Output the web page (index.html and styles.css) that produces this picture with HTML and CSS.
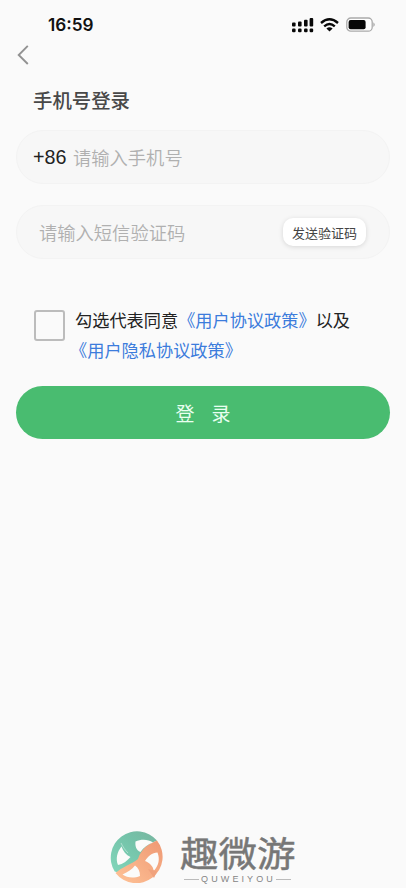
FILE: index.html
```html
<!DOCTYPE html>
<html lang="zh-CN">
<head>
<meta charset="utf-8">
<meta name="viewport" content="width=device-width, initial-scale=1">
<title>手机号登录</title>
<link rel="stylesheet" href="styles.css">
</head>
<body>
<header class="status">
  <span class="time">16:59</span>
  <svg class="signal" width="22" height="16" viewBox="0 0 22 16">
    <g fill="#080808"><rect x="0" y="5.5" width="3.6" height="4" rx="1"/><rect x="6" y="4.5" width="3.6" height="5" rx="1"/><rect x="12" y="2.7" width="3.6" height="6.8" rx="1"/><rect x="17.6" y="1" width="3.6" height="8.5" rx="1"/>
    <rect x="0" y="11.5" width="3.6" height="3.7" rx="1.2"/><rect x="6" y="11.5" width="3.6" height="3.7" rx="1.2"/><rect x="12" y="11.5" width="3.6" height="3.7" rx="1.2"/><rect x="17.6" y="11.5" width="3.6" height="3.7" rx="1.2"/></g>
  </svg>
  <svg class="wifi" width="19" height="14" viewBox="0 0 19 14" fill="none" stroke="#080808" stroke-width="2.4">
    <path d="M1 5Q9.5-2.4 18 5M4.2 8.4Q9.5 3.8 14.8 8.4"/><path d="M9.5 13.5L6.4 10.5Q9.5 8 12.6 10.5Z" fill="#080808" stroke="none"/>
  </svg>
  <svg class="battery" width="31" height="16" viewBox="0 0 31 16">
    <rect x=".8" y="1" width="25.4" height="13.2" rx="4" fill="#fff" stroke="#aaa" stroke-width="1.3"/><rect x="2.6" y="3" width="17" height="9.3" rx="2" fill="#080808"/><path d="M27.3 5.2Q30.4 7.6 27.3 10Z" fill="#aaa"/>
  </svg>
</header>
<nav class="nav">
  <svg width="12" height="20" viewBox="0 0 12 20" fill="none" stroke="#929292" stroke-width="1.9"><path d="M10.8.8L1.7 10L10.8 19"/></svg>
</nav>
<main>
  <h1>手机号登录</h1>
  <div class="field phone"><span class="prefix">+86</span><span class="hint">请输入手机号</span></div>
  <div class="field code"><span class="hint">请输入短信验证码</span><button class="send">发送验证码</button></div>
  <div class="agreement">
    <span class="checkbox"></span>
    <div class="terms"><p>勾选代表同意<a>《用户协议政策》</a>以及</p><p class="privacy"><a>《用户隐私协议政策》</a></p></div>
  </div>
  <button class="login"><span>登</span><span>录</span></button>
</main>
<footer>
  <svg class="logo" width="54" height="54" viewBox="0 0 54 54">
    <defs>
      <linearGradient id="green" x1="0" y1="1" x2="1" y2="0"><stop offset="0" stop-color="#82d6bb"/><stop offset=".6" stop-color="#74c3a9"/><stop offset="1" stop-color="#79b5a0"/></linearGradient>
      <linearGradient id="orange" x1="1" y1="0" x2="0" y2="1"><stop offset="0" stop-color="#ee9873"/><stop offset="1" stop-color="#ffc397"/></linearGradient>
    </defs>
    <path fill="url(#green)" d="M47 9.5A26.3 26.3 0 0 0 4.7 40.5C13 43 23 37 28.5 28.5C32 20 38 13 47 9.5Z"/>
    <path fill="url(#orange)" d="M47 9.5A26.3 26.3 0 1 1 5.5 42C12 36 21 33.5 28 28C31 18 38 13 47 9.5Z"/>
    <g fill="#fbfbfa">
      <path d="M25.5 10.5C31 8 38 8 43 11.5C38 13 33.5 16.5 30.5 21C26 19 25 15 25.5 10.5Z"/>
      <path d="M11.5 15.5C7 21 5.5 28 8 34C13 33 17 30 20.5 26C16 24 13 20 11.5 15.5Z"/>
      <path d="M30 45C24 47.5 17 47 12.5 43.5C18 41 22 38.5 25 34.5C28.5 37 30 40.5 30 45Z"/>
      <path d="M43.8 40C43 35 40 32 35 30C38 25 42 22 47.5 21.5C50 28 49 34 43.8 40Z"/>
    </g>
    <path d="M11 12C13 16 15 19 18 22" fill="none" stroke="#fff" stroke-opacity=".5" stroke-width=".8"/>
    <path d="M38 38L47 40L44 47" fill="#f0a27d"/>
  </svg>
  <div class="brand"><div class="name">趣微游</div><div class="latin"><i></i><span>QUWEIYOU</span><i></i></div></div>
</footer>
</body>
</html>
```
FILE: styles.css
```css
* { box-sizing: border-box; }
body { margin: 0; height: 888px; background: #fafafa; display: flex; flex-direction: column; overflow: hidden; font-family: "Liberation Sans", "Noto Sans CJK SC", sans-serif; color: #222; }
button { border: 0; padding: 0; font-family: inherit; }
svg { display: block; flex: none; }
.status { height: 44px; padding: 5px 30px 0 48px; display: flex; align-items: center; }
.time { font: 600 17.2px/20px Inter, sans-serif; color: #111; width: 244px; flex: none; }
.wifi { margin-left: 6px; }
.battery { margin-left: 7px; }
.nav { height: 23px; padding: 1px 0 0 17px; }
main { padding: 0 16px; }
h1 { margin: 20px 0 0 17px; font-size: 19.4px; line-height: 28px; font-weight: 500; color: #484848; }
.field { height: 54px; border-radius: 27px; background: #f7f7f7; border: 1px solid #f3f3f3; display: flex; align-items: center; }
.phone { margin-top: 15px; padding-left: 16px; }
.prefix { font-size: 19.7px; width: 40px; color: #222; }
.hint { font-size: 18.3px; font-weight: 350; color: #b0b0b0; white-space: nowrap; }
.code { margin-top: 21px; padding: 0 23px 0 22px; justify-content: space-between; }
.send { width: 83px; height: 28px; border-radius: 10px; background: #fff; box-shadow: 0 1px 5px #0002; font-size: 13px; color: #444; }
.agreement { margin: 47px 0 0 18px; display: flex; }
.checkbox { width: 31px; height: 31px; margin: 4px 10px 0 0; border: 2px solid #bcbcbc; border-radius: 3px; flex: none; }
.terms { white-space: nowrap; font-size: 17.2px; line-height: 30px; }
.terms p { margin: 0; }
.terms .privacy { margin-left: -5px; }
.agreement a { color: #3c7cdc; }
.login { display: flex; justify-content: center; align-items: center; gap: 17px; width: 374px; height: 53px; margin-top: 20px; border-radius: 27px; background: #49bc70; color: #e9fff0; font-size: 19px; }
footer { margin: auto 0 3px 110px; display: flex; }
.brand { margin-left: 16px; width: 116px; }
.name { font-size: 38.5px; line-height: 43px; color: #777; white-space: nowrap; font-weight: 400; -webkit-text-stroke: .5px #777; transform: translateY(2px) scaleY(.92); }
.latin { display: flex; align-items: center; margin-top: 1px; padding: 0 5px 0 4px; font-size: 9px; line-height: 8px; color: #858585; letter-spacing: 3.1px; }
.latin i { height: 1px; background: #bbb; flex: 1; }
.latin span { margin: 0 0 0 2px; }
```
